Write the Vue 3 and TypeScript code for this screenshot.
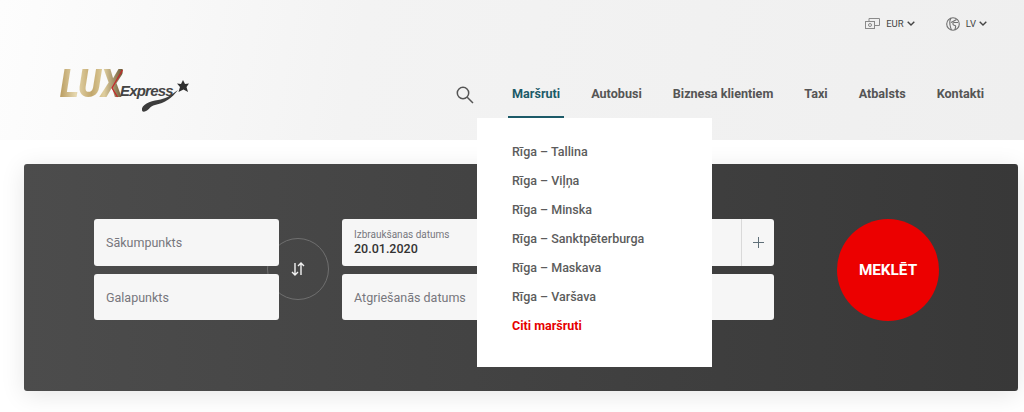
<script setup lang="ts">
const nav: string[] = ['Autobusi', 'Biznesa klientiem', 'Taxi', 'Atbalsts', 'Kontakti']
const routes: string[] = ['Rīga – Tallina', 'Rīga – Viļņa', 'Rīga – Minska', 'Rīga – Sanktpēterburga', 'Rīga – Maskava', 'Rīga – Varšava']
</script>

<template>
  <div class="page">
    <header class="header">
      <div class="topbar">
        <div class="top-item">
          <svg class="top-icon" width="15" height="11" viewBox="0 0 15 11" fill="none" stroke="#8a8a8a" stroke-width="1">
            <rect x="0.5" y="3.5" width="9" height="7" />
            <path d="M4 3.5V0.5H14.5V7.5H9.5" />
            <circle cx="5" cy="7" r="1.5" />
          </svg>
          <span>EUR</span>
          <svg class="chev" width="8" height="5" viewBox="0 0 8 5" fill="none" stroke="#444" stroke-width="1.4"><path d="M0.7 0.8L4 4L7.3 0.8" /></svg>
        </div>
        <div class="top-item lang">
          <svg class="top-icon" width="14" height="14" viewBox="0 0 14 14" fill="none" stroke="#707070" stroke-width="1.1">
            <circle cx="7" cy="7" r="6.3" />
            <path d="M5 1C3.500 3 3.500 5 4 8C4.500 10.500 5 12 5.500 13M5 5.500C7 4.500 9 3.500 10.500 2.500M12 5.500H8C6.500 5.500 6.500 8 8 8.200C9.500 8.400 10 9 9.500 10.500C9.200 11.500 9 12.500 9 13" />
          </svg>
          <span>LV</span>
          <svg class="chev" width="8" height="5" viewBox="0 0 8 5" fill="none" stroke="#444" stroke-width="1.4"><path d="M0.7 0.8L4 4L7.3 0.8" /></svg>
        </div>
      </div>
      <div class="mainbar">
        <div class="logo">
          <span class="lux">LUX</span>
          <span class="express">Express</span>
          <svg class="swoosh" width="130" height="50" viewBox="0 0 130 50">
            <path d="M62.500 5L52 23L57.500 32" fill="none" stroke="#c8242b" stroke-width="1.200" />
            <path d="M82 45C81 40 90 36 98 35C105 34 110 31 118 25C112 33 105 38 95 40C90 41 89 45 86 46C84 47 82 47 82 45Z" fill="#3c3c3c" />
            <polygon points="123,15 125,19 129,18.500 126.500,22 128,27 123.500,24.500 118.500,27 120,22 117,18.500 121,19" fill="#2e2e2e" />
          </svg>
        </div>
        <nav class="nav">
          <svg class="search" width="18" height="18" viewBox="0 0 18 18" fill="none" stroke="#555" stroke-width="1.500">
            <circle cx="7" cy="7" r="5.700" />
            <path d="M11.200 11.200L17 17" />
          </svg>
          <a class="nav-link active">Maršruti</a>
          <a v-for="item in nav" :key="item" class="nav-link">{{ item }}</a>
        </nav>
      </div>
    </header>

    <ul class="menu">
      <li v-for="r in routes" :key="r">{{ r }}</li>
      <li class="other">Citi maršruti</li>
    </ul>

    <section class="panel">
      <div class="col-places">
        <div class="field">Sākumpunkts</div>
        <div class="field">Galapunkts</div>
        <div class="swap">
          <svg width="14" height="14" viewBox="0 0 14 14" fill="none" stroke="#f2f2f2" stroke-width="1.400">
            <path d="M4 1V13M1 10L4 13L7 10M10 13V1M7 4L10 1L13 4" />
          </svg>
        </div>
      </div>
      <div class="col-dates">
        <div class="field date-field">
          <div class="date-main">
            <span class="date-label">Izbraukšanas datums</span>
            <span class="date-value">20.01.2020</span>
          </div>
          <div class="plus">
            <svg width="11" height="11" viewBox="0 0 11 11" stroke="#5f6f78" stroke-width="1"><path d="M5.500 0V11M0 5.500H11" /></svg>
          </div>
        </div>
        <div class="field">Atgriešanās datums</div>
      </div>
      <button class="go">MEKLĒT</button>
    </section>
  </div>
</template>

<style>
html, body { margin: 0; background: #fff; overflow: hidden; }
</style>

<style scoped>
.page {
  position: relative;
  width: 1024px;
  height: 412px;
  overflow: hidden;
  font-family: Roboto, "Liberation Sans", sans-serif;
  background: #fff;
}
.header {
  height: 140px;
  background: linear-gradient(100deg, #fdfdfd 0%, #f3f3f3 35%, #efefef 100%);
  box-sizing: border-box;
}
.topbar {
  height: 46px;
  display: flex;
  justify-content: flex-end;
  align-items: center;
  gap: 31px;
  padding-right: 37px;
  font-size: 9.500px;
  color: #444;
}
.top-item { display: flex; align-items: center; }
.top-icon { margin-right: 6px; margin-top: 1px; }
.chev { margin-left: 3px; margin-top: 1px; }
.mainbar {
  display: flex;
  justify-content: space-between;
  height: 72px;
  padding: 0 36px 0 60px;
}
.logo { position: relative; width: 130px; height: 50px; margin-top: 19px; }
.lux {
  position: absolute;
  left: 0;
  top: 0;
  font: italic 900 38px/38px Roboto, sans-serif;
  transform: scaleX(0.95);
  transform-origin: left top;
  letter-spacing: -0.500px;
  background: linear-gradient(90deg, #b99c60 0%, #e6d8b0 25%, #c2a76c 50%, #e0cf9f 70%, #6b5836 100%);
  -webkit-background-clip: text;
  background-clip: text;
  color: transparent;
}
.express {
  position: absolute;
  left: 60px;
  top: 17px;
  font: italic 700 15px/18px "Liberation Sans", sans-serif;
  letter-spacing: -0.800px;
  color: #444;
}
.swoosh { position: absolute; left: 0; top: 0; overflow: visible; }
.nav { display: flex; align-items: stretch; gap: 23px; }
.search { align-self: flex-start; margin: 40px 11px 0 0; }
.nav-link {
  display: flex;
  align-items: center;
  padding: 25px 4px 0;
  font-size: 12.600px;
  font-weight: 700;
  color: #555;
  border-bottom: 2px solid transparent;
  box-sizing: border-box;
}
.nav-link.active { color: #1c5a68; border-bottom-color: #1c5a68; }
.menu {
  position: absolute;
  left: 477px;
  top: 118px;
  z-index: 2;
  width: 235px;
  height: 249px;
  box-sizing: border-box;
  margin: 0;
  padding: 19px 0 0 35px;
  list-style: none;
  background: #fff;
  font-size: 12.500px;
  font-weight: 500;
  color: #5c5c5c;
}
.menu li { height: 29px; line-height: 29px; }
.menu .other { color: #e60000; font-weight: 700; }
.panel {
  display: flex;
  align-items: flex-start;
  box-sizing: border-box;
  width: 994px;
  height: 227px;
  margin: 24px 0 0 24px;
  padding: 55px 0 0 70px;
  border-radius: 3px;
  background: linear-gradient(90deg, #4c4c4c 0%, #383838 100%);
  box-shadow: 0 4px 24px rgba(0, 0, 0, 0.1);
}
.col-places, .col-dates { display: flex; flex-direction: column; gap: 8px; position: relative; }
.col-places { width: 185px; margin-right: 63px; }
.col-dates { width: 432px; margin-right: 63px; }
.field {
  position: relative;
  z-index: 1;
  height: 46.500px;
  box-sizing: border-box;
  padding: 1px 0 0 12px;
  display: flex;
  align-items: center;
  background: #f6f6f6;
  border-radius: 3px;
  font-size: 12.500px;
  color: #77777d;
}
.swap {
  position: absolute;
  left: 173px;
  top: 19px;
  width: 62px;
  height: 62px;
  box-sizing: border-box;
  border: 1px solid #6f6f6f;
  border-radius: 50%;
  display: flex;
  align-items: center;
  justify-content: center;
}
.date-field { padding: 0 0 0 12px; justify-content: space-between; }
.date-main { display: flex; flex-direction: column; }
.date-label { font-size: 10px; line-height: 12px; margin-top: 1px; }
.date-value { font-size: 12.500px; font-weight: 500; line-height: 16px; color: #333; }
.plus {
  width: 32px;
  height: 100%;
  border-left: 1px solid #d9d9d9;
  display: flex;
  align-items: center;
  justify-content: center;
}
.go {
  width: 102px;
  height: 102px;
  border: 0;
  padding: 0;
  border-radius: 50%;
  background: #ec0000;
  color: #fff;
  font-family: inherit;
  font-size: 15.300px;
  font-weight: 700;
}
</style>
